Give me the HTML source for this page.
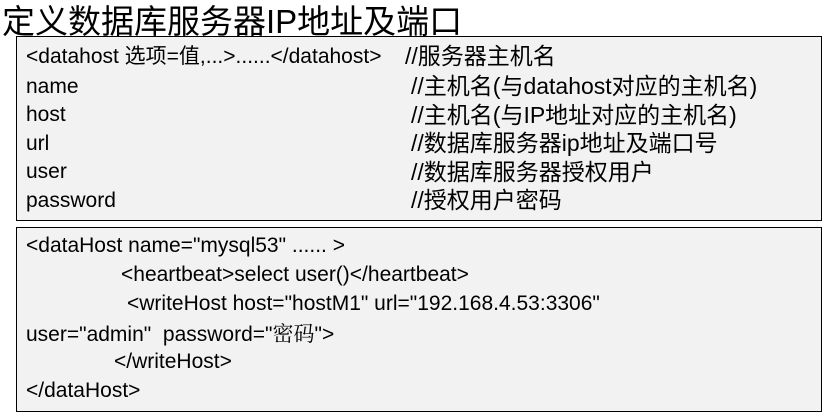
<!DOCTYPE html>
<html><head><meta charset="utf-8"><style>
body{margin:0;width:833px;height:419px;background:#fff;position:relative;overflow:hidden;font-family:"Liberation Sans","Noto Sans CJK SC",sans-serif;color:#000}
.t{position:absolute;left:2px;top:-5px;font-size:33px;white-space:nowrap}
.box{position:absolute;left:16px;width:806px;background:#f2f2f2;border:1.5px solid #000;box-sizing:border-box}
.l{position:absolute;white-space:nowrap;font-size:21px;line-height:26px}
.c{position:absolute;left:394px;white-space:nowrap;font-size:23px;line-height:26px}
</style></head><body>
<div class="t">定义数据库服务器IP地址及端口</div>
<div class="box" style="top:36px;height:185px">
<div class="l" style="left:9px;top:7px">&lt;datahost 选项=值,...&gt;......&lt;/datahost&gt;</div>
<div class="c" style="top:6px;left:388px">//服务器主机名</div>
<div class="l" style="left:9px;top:37px">name</div>
<div class="c" style="top:36px">//主机名(与datahost对应的主机名)</div>
<div class="l" style="left:9px;top:65px">host</div>
<div class="c" style="top:65px">//主机名(与IP地址对应的主机名)</div>
<div class="l" style="left:9px;top:94px">url</div>
<div class="c" style="top:93px">//数据库服务器ip地址及端口号</div>
<div class="l" style="left:9px;top:122px">user</div>
<div class="c" style="top:122px">//数据库服务器授权用户</div>
<div class="l" style="left:9px;top:151px">password</div>
<div class="c" style="top:150px">//授权用户密码</div>
</div>
<div class="box" style="top:227px;height:185px">
<div class="l" style="left:9px;top:5px">&lt;dataHost name="mysql53" ...... &gt;</div>
<div class="l" style="left:104px;top:34px">&lt;heartbeat&gt;select user()&lt;/heartbeat&gt;</div>
<div class="l" style="left:110px;top:63px">&lt;writeHost host="hostM1" url="192.168.4.53:3306"</div>
<div class="l" style="left:9px;top:92px">user="admin"&nbsp; password="<span style="font-family:'Noto Serif CJK SC',serif">密码</span>"&gt;</div>
<div class="l" style="left:97px;top:121px">&lt;/writeHost&gt;</div>
<div class="l" style="left:9px;top:150px">&lt;/dataHost&gt;</div>
</div>
</body></html>
